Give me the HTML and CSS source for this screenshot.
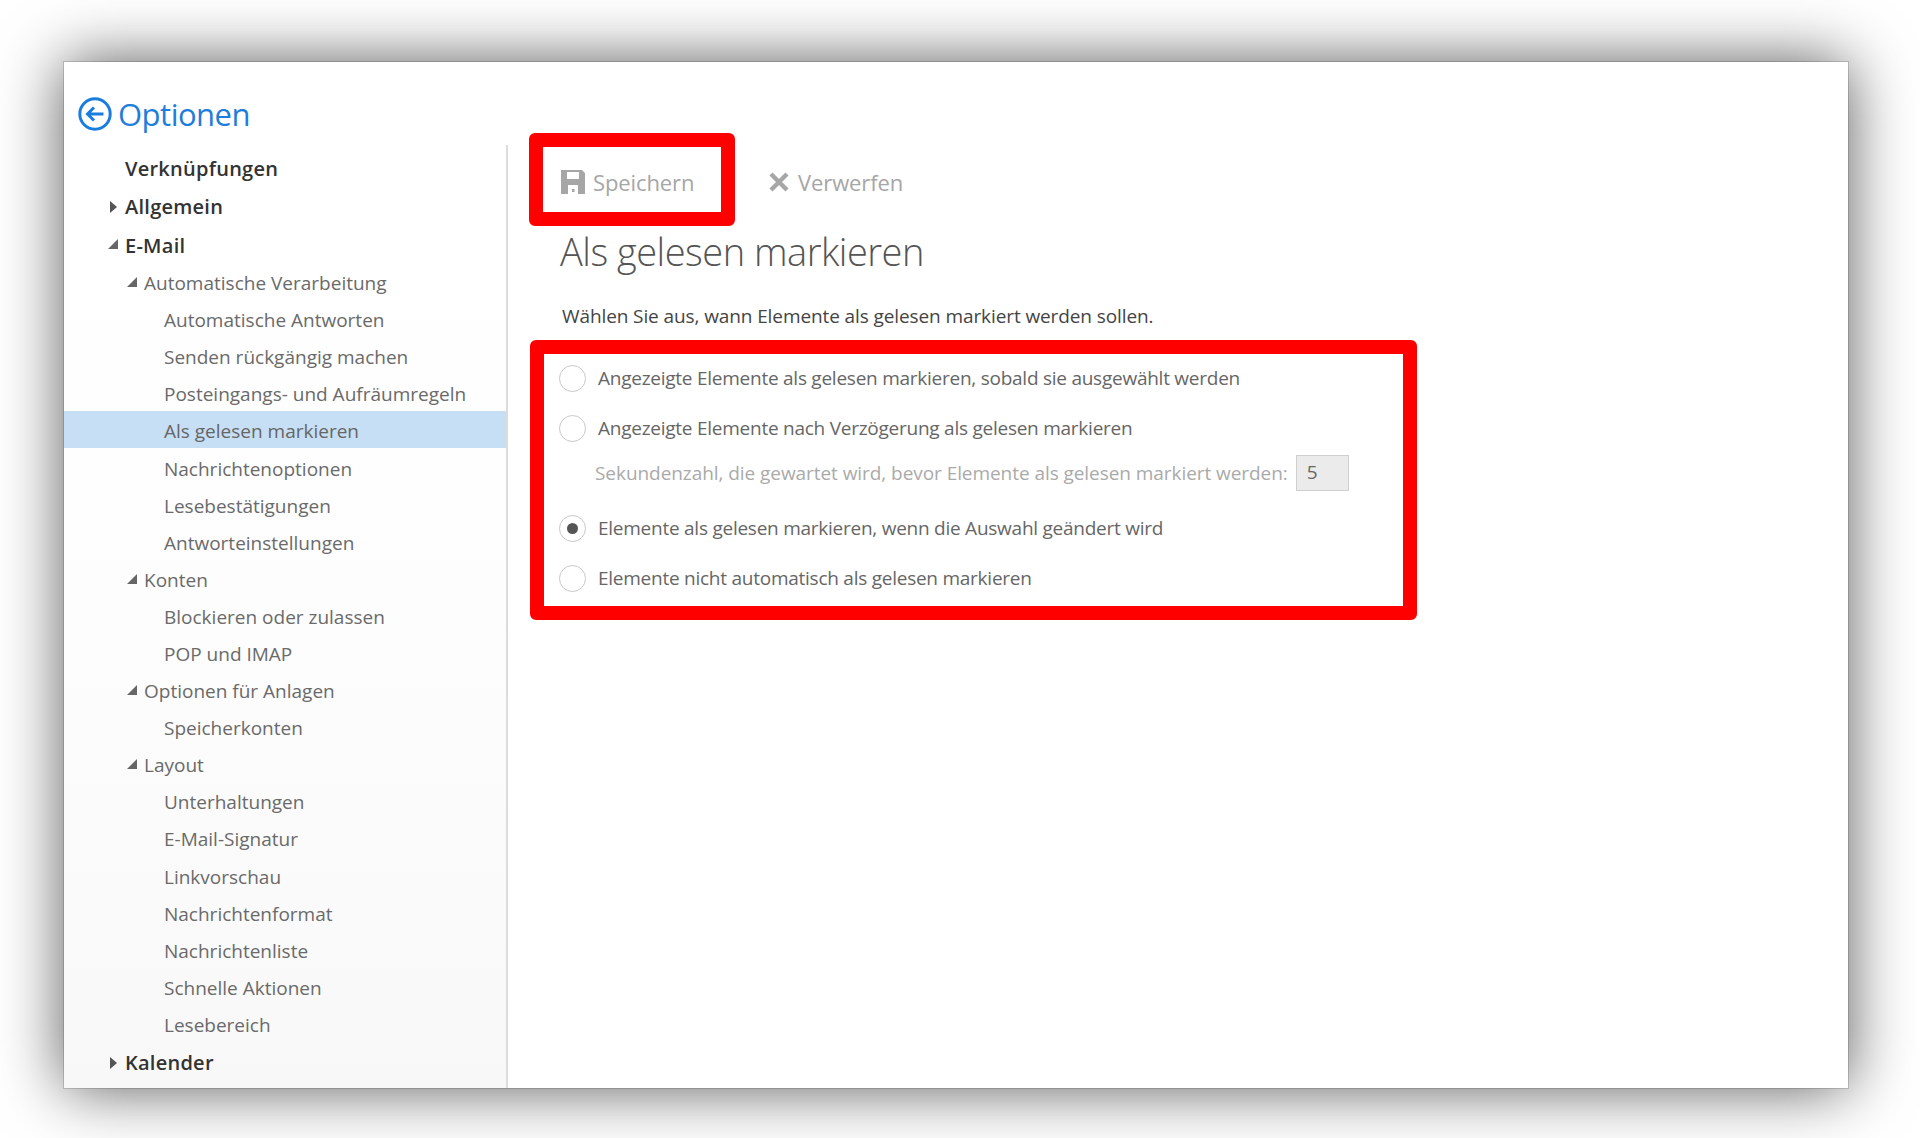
FILE: index.html
```html
<!DOCTYPE html>
<html lang="de">
<head>
    <meta charset="UTF-8">
    <title>Optionen</title>
    <link rel="stylesheet" href="styles.css">
</head>
<body>
    <div class="window">
        <div class="title">
            <svg class="back-icon" width="34" height="34" viewBox="0 0 34 34">
                <circle cx="17" cy="17" r="15.2" fill="none" stroke="#1b7ce0" stroke-width="3"/>
                <path d="M25.5 17H10M16 10.5L9.5 17L16 23.5" fill="none" stroke="#1b7ce0" stroke-width="3"/>
            </svg>
            <span>Optionen</span>
        </div>
        <div class="columns">
            <nav class="sidebar">
                <div class="item top">Verknüpfungen</div>
                <div class="item top"><i class="arrow closed"></i>Allgemein</div>
                <div class="item top"><i class="arrow open"></i>E-Mail</div>
                <div class="item sub"><i class="arrow open"></i>Automatische Verarbeitung</div>
                <div class="item leaf">Automatische Antworten</div>
                <div class="item leaf">Senden rückgängig machen</div>
                <div class="item leaf">Posteingangs- und Aufräumregeln</div>
                <div class="item leaf selected">Als gelesen markieren</div>
                <div class="item leaf">Nachrichtenoptionen</div>
                <div class="item leaf">Lesebestätigungen</div>
                <div class="item leaf">Antworteinstellungen</div>
                <div class="item sub"><i class="arrow open"></i>Konten</div>
                <div class="item leaf">Blockieren oder zulassen</div>
                <div class="item leaf">POP und IMAP</div>
                <div class="item sub"><i class="arrow open"></i>Optionen für Anlagen</div>
                <div class="item leaf">Speicherkonten</div>
                <div class="item sub"><i class="arrow open"></i>Layout</div>
                <div class="item leaf">Unterhaltungen</div>
                <div class="item leaf">E-Mail-Signatur</div>
                <div class="item leaf">Linkvorschau</div>
                <div class="item leaf">Nachrichtenformat</div>
                <div class="item leaf">Nachrichtenliste</div>
                <div class="item leaf">Schnelle Aktionen</div>
                <div class="item leaf">Lesebereich</div>
                <div class="item top"><i class="arrow closed"></i>Kalender</div>
            </nav>
            <main class="content">
                <div class="toolbar">
                    <div class="tool save">
                        <svg width="24" height="24" viewBox="0 0 24 24">
                            <path fill-rule="evenodd" fill="#a6a6a6" d="M0 0H21L24 3V24H0ZM6 2V9H18V2ZM7 15V24H17V15ZM11 19H13.5V22H11Z"/>
                        </svg>
                        <span>Speichern</span>
                    </div>
                    <div class="tool discard">
                        <svg width="20" height="20" viewBox="0 0 20 20">
                            <path d="M2 2L18 18M18 2L2 18" fill="none" stroke="#a6a6a6" stroke-width="4.4"/>
                        </svg>
                        <span>Verwerfen</span>
                    </div>
                </div>
                <h1>Als gelesen markieren</h1>
                <p class="intro">Wählen Sie aus, wann Elemente als gelesen markiert werden sollen.</p>
                <div class="options">
                    <label class="option"><i class="radio"></i>Angezeigte Elemente als gelesen markieren, sobald sie ausgewählt werden</label>
                    <label class="option"><i class="radio"></i>Angezeigte Elemente nach Verzögerung als gelesen markieren</label>
                    <div class="delay">
                        <span>Sekundenzahl, die gewartet wird, bevor Elemente als gelesen markiert werden:</span>
                        <div class="delay-input">5</div>
                    </div>
                    <label class="option"><i class="radio checked"></i>Elemente als gelesen markieren, wenn die Auswahl geändert wird</label>
                    <label class="option"><i class="radio"></i>Elemente nicht automatisch als gelesen markieren</label>
                </div>
            </main>
        </div>
    </div>
    <!-- rote Markierungen aus dem Screenshot -->
    <div class="mark mark-save"></div>
    <div class="mark mark-options"></div>
</body>
</html>
```

FILE: styles.css
```css
html, body { margin: 0; height: 100%; }
body { background: #fff; overflow: hidden; position: relative; font-family: "Open Sans", "Liberation Sans", sans-serif; }
.window { position: absolute; left: 64px; top: 62px; width: 1784px; height: 1026px; background: #fff; box-shadow: 0 0 60px rgba(0,0,0,.66), 0 0 0 1px #d8d8d8; display: flex; flex-direction: column; }
.title { height: 83px; display: flex; align-items: center; padding: 20px 0 0 14px; box-sizing: border-box; gap: 6px; color: #1f7ddb; font-size: 31px; letter-spacing: -0.5px; }
.back-icon { flex: none; }
.columns { flex: 1; display: flex; min-height: 0; }
.sidebar { width: 442px; background: linear-gradient(#fff, #fdfdfd 50%, #f8f8f8); border-right: 2px solid #dcdcdc; padding-top: 4px; box-sizing: content-box; }
.item { display: flex; align-items: center; height: 37.1px; font-size: 19px; color: #6a6a6a; white-space: nowrap; position: relative; }
.top { height: 38.5px; padding-left: 61px; color: #333; font-weight: 600; font-size: 20px; letter-spacing: .25px; }
.sub { padding-left: 80px; }
.leaf { padding-left: 100px; }
.selected { height: 33.1px; padding-top: 4px; margin: -2px 0 2px; background: #c7dff4; color: #666; }
.arrow { position: absolute; width: 0; height: 0; }
.top .arrow.closed { left: 46px; }
.top .arrow.open { left: 44px; }
.sub .arrow { left: 63px; }
.arrow.closed { border-left: 7px solid #555; border-top: 6.5px solid transparent; border-bottom: 6.5px solid transparent; }
.arrow.open { border-bottom: 10px solid #666; border-left: 10px solid transparent; margin-top: -2px; }
.content { flex: 1; padding-left: 52px; }
.toolbar { display: flex; align-items: center; height: 74px; }
.tool { display: flex; align-items: center; color: #a6a6a6; font-size: 22px; letter-spacing: -0.1px; }
.save { width: 208px; margin-left: 1px; gap: 8px; }
.discard { gap: 9px; }
h1 { margin: 7px 0 0; font-weight: 300; font-size: 38px; letter-spacing: -0.5px; color: #555; line-height: 50px; }
.intro { margin: 27px 0 0 2px; font-size: 19px; letter-spacing: -0.1px; color: #444; line-height: 26px; }
.options { margin-top: 24px; }
.option { display: flex; align-items: center; height: 50px; gap: 12px; margin-left: -1px; font-size: 19px; letter-spacing: -0.25px; color: #666; }
.radio { width: 25px; height: 25px; border: 1px solid #c8c8c8; border-radius: 50%; background: #fff; display: flex; align-items: center; justify-content: center; flex: none; }
.radio.checked::after { content: ""; width: 11px; height: 11px; border-radius: 50%; background: #555; }
.delay { display: flex; align-items: center; height: 40px; margin: 0 0 10px 35px; gap: 8px; font-size: 19px; letter-spacing: -0.06px; color: #aaa; }
.delay-input { width: 53px; height: 36px; box-sizing: border-box; background: #ebebeb; border: 1px solid #cfcfcf; color: #666; padding-left: 10px; line-height: 33px; }
.mark { position: absolute; border: 14px solid #f00; border-radius: 6px; box-sizing: border-box; }
.mark-save { left: 529px; top: 133px; width: 206px; height: 93px; }
.mark-options { left: 530px; top: 340px; width: 887px; height: 280px; }
```
